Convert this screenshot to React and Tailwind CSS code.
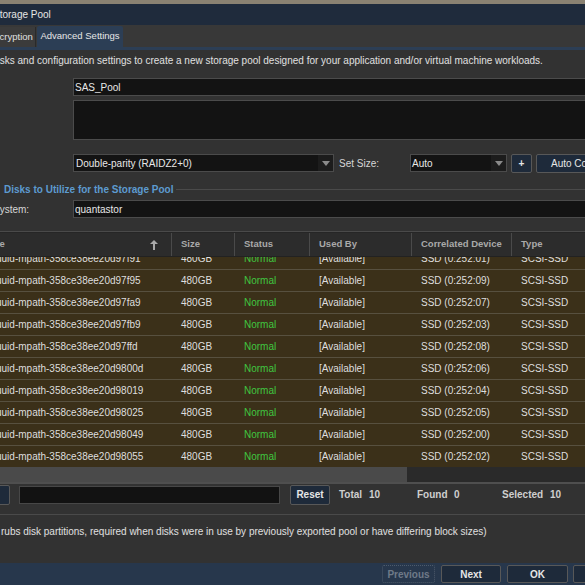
import React from "react";

const disks = [
    { id: "358ce38ee20d97f91", dev: "SSD (0:252:01)" },
    { id: "358ce38ee20d97f95", dev: "SSD (0:252:09)" },
    { id: "358ce38ee20d97fa9", dev: "SSD (0:252:07)" },
    { id: "358ce38ee20d97fb9", dev: "SSD (0:252:03)" },
    { id: "358ce38ee20d97ffd", dev: "SSD (0:252:08)" },
    { id: "358ce38ee20d9800d", dev: "SSD (0:252:06)" },
    { id: "358ce38ee20d98019", dev: "SSD (0:252:04)" },
    { id: "358ce38ee20d98025", dev: "SSD (0:252:05)" },
    { id: "358ce38ee20d98049", dev: "SSD (0:252:00)" },
    { id: "358ce38ee20d98055", dev: "SSD (0:252:02)" },
];

const Caret = () => (
    <div className="w-[15px] shrink-0 h-full flex items-center justify-center bg-[#1c1c1c]">
        <svg width="8" height="5" viewBox="0 0 8 5">
            <path d="M0 0h8L4 5z" fill="#8a8a8a" />
        </svg>
    </div>
);

const Btn = ({ children, className = "" }) => (
    <div className={`shrink-0 flex items-center justify-center rounded-[2px] border border-[#585858] bg-[#1e2a3a] text-[#e6e6e6] font-bold whitespace-nowrap ${className}`}>
        {children}
    </div>
);

const Cell = ({ w, children, className = "" }) => (
    <div className={`shrink-0 pl-[9px] whitespace-nowrap ${w} ${className}`}>{children}</div>
);

export default function App() {
    return (
        <div className="w-[585px] h-[585px] overflow-hidden bg-[#323232] text-[10px] text-[#dcdcdc] font-['Liberation_Sans',Arial,sans-serif] flex flex-col">
            <div className="h-[4px] shrink-0 bg-[#8a8272]" />

            {/* title */}
            <div className="h-[21px] shrink-0 bg-[#1f2b3c] flex items-center text-[#e6e6e6] whitespace-nowrap">
                <span className="-ml-[7px]">Storage Pool</span>
            </div>

            {/* tabs */}
            <div className="h-[25px] shrink-0 bg-[#383838] flex items-end border-b-[3px] border-[#2c3e55] text-[9.5px]">
                <div className="h-[20px] w-[36px] shrink-0 flex items-center bg-[#3b3b3b] border-r border-[#2a2a2a] whitespace-nowrap overflow-hidden text-[#e0e0e0]">
                    <span className="-ml-[12px]">Encryption</span>
                </div>
                <div className="h-[21px] ml-px w-[86px] shrink-0 flex items-center justify-center bg-[#2c3e55] text-[#e6e6e6] rounded-t-[2px] whitespace-nowrap">
                    Advanced Settings
                </div>
            </div>

            {/* form */}
            <div className="shrink-0 pt-[4px]">
                <div className="h-[13px] flex items-center whitespace-nowrap text-[#e0e0e0]">
                    <span className="-ml-[8px]">disks and configuration settings to create a new storage pool designed for your application and/or virtual machine workloads.</span>
                </div>
                <div className="mt-[11px] pl-[73px]">
                    <div className="h-[18px] flex items-center pl-[1px] bg-[#131313] border border-[#4b4b4b] border-r-0 text-[#e8e8e8]">SAS_Pool</div>
                    <div className="mt-[4px] h-[40px] bg-[#131313] border border-[#4b4b4b] border-r-0" />
                </div>
                <div className="mt-[14px] h-[18px] flex items-center">
                    <div className="ml-[73px] w-[261px] shrink-0 h-full flex border border-[#4b4b4b] bg-[#131313]">
                        <div className="flex-1 flex items-center pl-[2px] text-[#e8e8e8]">Double-parity (RAIDZ2+0)</div>
                        <Caret />
                    </div>
                    <div className="ml-[5px] w-[71px] shrink-0 text-[#d6d6d6]">Set Size:</div>
                    <div className="w-[97px] shrink-0 h-full flex border border-[#4b4b4b] bg-[#131313]">
                        <div className="flex-1 flex items-center pl-[1px] text-[#e8e8e8]">Auto</div>
                        <Caret />
                    </div>
                    <Btn className="ml-[4px] w-[21px] h-[19px] text-[10px]">+</Btn>
                    <Btn className="ml-[4px] w-[62px] h-[19px] font-normal justify-start pl-[14px]">Auto Config</Btn>
                </div>

                {/* fieldset */}
                <div className="mt-[11px] h-[13px] flex items-center">
                    <span className="pl-[4px] pr-[3px] text-[#5d9bd0] font-bold whitespace-nowrap">Disks to Utilize for the Storage Pool</span>
                    <div className="flex-1 h-px bg-[#4a4a4a]" />
                </div>
                <div className="mt-[4px] h-[18px] flex items-center">
                    <div className="w-[73px] shrink-0 whitespace-nowrap overflow-hidden text-[#d6d6d6]">
                        <span className="-ml-[7px]">System:</span>
                    </div>
                    <div className="flex-1 h-full flex items-center pl-[1px] bg-[#131313] border border-[#4b4b4b] border-r-0 text-[#e8e8e8]">quantastor</div>
                </div>
                <div className="mt-[13px] h-px bg-[#4a4a4a]" />
            </div>

            {/* table */}
            <div className="shrink-0 border-t border-[#262626]">
                <div className="h-[24px] flex items-center bg-[#2c2c2c] text-[#a9a9a9] text-[9.5px] font-bold border-b border-[#222]">
                    <div className="w-[172px] shrink-0 h-full flex items-center justify-between pr-[13px] border-r border-[#4a4a4a] whitespace-nowrap overflow-hidden">
                        <span className="-ml-[21px]">Name</span>
                        <svg width="8" height="10" viewBox="0 0 8 10">
                            <path d="M4 0L0 4h3v6h2V4h3z" fill="#a9a9a9" />
                        </svg>
                    </div>
                    <Cell w="w-[63px] h-full flex items-center border-r border-[#4a4a4a]">Size</Cell>
                    <Cell w="w-[75px] h-full flex items-center border-r border-[#4a4a4a]">Status</Cell>
                    <Cell w="w-[102px] h-full flex items-center border-r border-[#4a4a4a]">Used By</Cell>
                    <Cell w="w-[100px] h-full flex items-center border-r border-[#4a4a4a]">Correlated Device</Cell>
                    <Cell w="w-[80px] h-full flex items-center">Type</Cell>
                </div>
                <div className="h-[210px] overflow-hidden bg-[#3b3019]">
                    <div className="-mt-[9px]">
                        {disks.map((d) => (
                            <div key={d.id} className="h-[22px] flex items-center border-b border-[#57503f] text-[#dedede]">
                                <div className="w-[172px] shrink-0 whitespace-nowrap overflow-hidden">
                                    <span className="-ml-[4px]">uuid-mpath-{d.id}</span>
                                </div>
                                <Cell w="w-[63px]">480GB</Cell>
                                <Cell w="w-[75px]" className="text-[#40c640]">Normal</Cell>
                                <Cell w="w-[102px]">[Available]</Cell>
                                <Cell w="w-[100px]">{d.dev}</Cell>
                                <Cell w="w-[80px]">SCSI-SSD</Cell>
                            </div>
                        ))}
                    </div>
                </div>
                <div className="h-[15px] flex bg-[#2a2a2a]">
                    <div className="w-[407px] h-full bg-[#4a4a4a]" />
                </div>
            </div>
            <div className="h-[2px] shrink-0 bg-[#4f4f4f]" />

            {/* search / totals */}
            <div className="shrink-0 h-[21px] flex items-center font-bold text-[#cfcfcf] whitespace-nowrap">
                <Btn className="-ml-[10px] w-[20px] h-[20px]" />
                <div className="ml-[9px] w-[261px] shrink-0 h-[18px] bg-[#121212] border border-[#474747]" />
                <Btn className="ml-[10px] w-[40px] h-[20px]">Reset</Btn>
                <span className="ml-[9px] w-[30px] shrink-0">Total</span>
                <span className="w-[48px] shrink-0">10</span>
                <span className="w-[37px] shrink-0">Found</span>
                <span className="w-[48px] shrink-0">0</span>
                <span className="w-[48px] shrink-0">Selected</span>
                <span>10</span>
            </div>
            <div className="mt-[9px] h-px shrink-0 bg-[#4a4a4a]" />
            <div className="mt-[10px] h-[13px] shrink-0 flex items-center whitespace-nowrap text-[#e0e0e0]">
                <span className="ml-px">rubs disk partitions, required when disks were in use by previously exported pool or have differing block sizes)</span>
            </div>

            {/* footer */}
            <div className="mt-auto h-[22px] shrink-0 bg-[#27374c] flex items-center pl-[382px] whitespace-nowrap">
                <div className="w-[53px] shrink-0 h-[18px] flex items-center justify-center rounded-[2px] border border-dotted border-[#4d5a6a] text-[#6f7a88] font-bold">Previous</div>
                <Btn className="ml-[6px] w-[60px] h-[18px]">Next</Btn>
                <Btn className="ml-[6px] w-[61px] h-[18px]">OK</Btn>
                <Btn className="ml-[5px] w-[40px] h-[18px]" />
            </div>
        </div>
    );
}
